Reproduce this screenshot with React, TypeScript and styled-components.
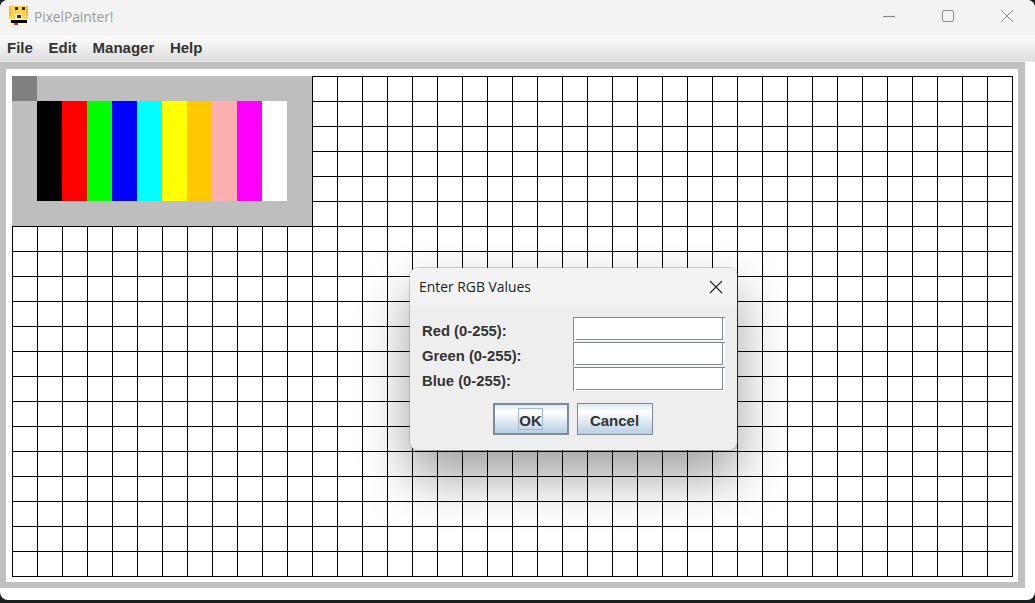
import React from 'react';
import styled, { createGlobalStyle } from 'styled-components';

const GlobalStyle = createGlobalStyle`
  html, body {
    margin: 0;
    padding: 0;
    background: #1c2023;
    overflow: hidden;
  }
  * {
    box-sizing: border-box;
  }
`;

const COLORS = ['#000000', '#ff0000', '#00ff00', '#0000ff', '#00ffff', '#ffff00', '#ffc800', '#ffafaf', '#ff00ff', '#ffffff'];
const MENUS = ['File', 'Edit', 'Manager', 'Help'];
const CHANNELS = ['Red', 'Green', 'Blue'];

const AppIcon: React.FC = () => (
  <svg width="20" height="20" viewBox="0 0 20 20" shapeRendering="crispEdges">
    <rect x="0" y="0" width="19" height="13" fill="#fdd44c" />
    <rect x="0" y="13" width="19" height="7" fill="#fff3d0" />
    <rect x="0" y="0" width="2" height="10" fill="#f7b93a" />
    <rect x="17" y="0" width="2" height="10" fill="#f7b93a" />
    <rect x="6" y="1" width="3" height="3" fill="#2a2a2a" />
    <rect x="13" y="1" width="3" height="3" fill="#2a2a2a" />
    <rect x="6" y="8" width="7" height="5" fill="#fff3d0" />
    <rect x="8" y="9" width="4" height="3" fill="#3a2c20" />
    <rect x="2" y="14" width="16" height="3" fill="#000000" />
    <rect x="5" y="17" width="4" height="2" fill="#e0202a" />
  </svg>
);

const App: React.FC = () => {
  return (
    <>
      <GlobalStyle />
      <Window>
        <TitleBar>
          <TitleIcon>
            <AppIcon />
          </TitleIcon>
          <TitleText>PixelPainter!</TitleText>
          <WindowControls>
            <ControlButton>
              <svg width="12" height="12" viewBox="0 0 12 12">
                <path d="M0 6.5h12" stroke="#8c8c8c" strokeWidth="1.2" fill="none" />
              </svg>
            </ControlButton>
            <ControlButton>
              <svg width="14" height="14" viewBox="0 0 14 14">
                <rect x="1.5" y="1.5" width="11" height="11" rx="1.5" stroke="#8c8c8c" strokeWidth="1" fill="none" />
              </svg>
            </ControlButton>
            <ControlButton>
              <svg width="14" height="14" viewBox="0 0 14 14">
                <path d="M1 1l12 12M13 1L1 13" stroke="#8c8c8c" strokeWidth="1" fill="none" />
              </svg>
            </ControlButton>
          </WindowControls>
        </TitleBar>
        <MenuBar>
          {MENUS.map((menu) => (
            <MenuItem key={menu}>{menu}</MenuItem>
          ))}
        </MenuBar>
        <Frame>
          <Canvas>
            <Grid />
            <Palette>
              <SelectedColor />
              <Swatches>
                {COLORS.map((color) => (
                  <Swatch key={color} $color={color} />
                ))}
              </Swatches>
            </Palette>
          </Canvas>
        </Frame>
        <Dialog>
          <DialogHeader>
            <DialogTitle>Enter RGB Values</DialogTitle>
            <svg width="14" height="14" viewBox="0 0 14 14">
              <path d="M1 1l12 12M13 1L1 13" stroke="#222" strokeWidth="1.1" fill="none" />
            </svg>
          </DialogHeader>
          <DialogBody>
            <Fields>
              {CHANNELS.map((channel) => (
                <React.Fragment key={channel}>
                  <FieldLabel>{`${channel} (0-255):`}</FieldLabel>
                  <FieldInput />
                </React.Fragment>
              ))}
            </Fields>
            <Buttons>
              <DialogButton $primary>
                <FocusRing>OK</FocusRing>
              </DialogButton>
              <DialogButton>Cancel</DialogButton>
            </Buttons>
          </DialogBody>
        </Dialog>
      </Window>
    </>
  );
};

export default App;

const Window = styled.div`
  position: relative;
  width: 1035px;
  height: 600px;
  display: flex;
  flex-direction: column;
  background: #ffffff;
  border-radius: 8px;
  overflow: hidden;
  font-family: 'Liberation Sans', Arial, sans-serif;
`;

const TitleBar = styled.div`
  height: 35px;
  flex: none;
  display: flex;
  align-items: center;
  background: #f3f3f3;
`;

const TitleIcon = styled.div`
  display: flex;
  margin: 0 5px 3px 9px;
`;

const TitleText = styled.span`
  font-family: 'Open Sans', 'Noto Sans', sans-serif;
  font-size: 13.7px;
  color: #9a9a9a;
  margin-bottom: 3px;
`;

const WindowControls = styled.div`
  margin-left: auto;
  display: flex;
  align-items: center;
  gap: 3px;
  margin-bottom: 3px;
`;

const ControlButton = styled.div`
  width: 56px;
  display: flex;
  justify-content: center;
  align-items: center;
`;

const MenuBar = styled.div`
  height: 27px;
  flex: none;
  display: flex;
  align-items: center;
  gap: 15.7px;
  padding: 0 0 2px 7px;
  background: linear-gradient(#fbfbfb, #f4f4f4 30%, #dedede 96%, #e9e9e9 96%);
`;

const MenuItem = styled.span`
  font-size: 15px;
  font-weight: 700;
  color: #333333;
`;

const Frame = styled.div`
  width: 1025px;
  height: 526px;
  flex: none;
  padding: 7px 7px 6px 6px;
  background: #c0c0c0;
`;

const Canvas = styled.div`
  position: relative;
  height: 100%;
  padding: 7px 6px;
  background: #ffffff;
`;

const Grid = styled.div`
  width: 1001px;
  height: 501px;
  background-image: linear-gradient(#000 1px, transparent 1px), linear-gradient(90deg, #000 1px, transparent 1px);
  background-size: 25px 25px;
`;

const Palette = styled.div`
  position: absolute;
  left: 6px;
  top: 7px;
  width: 300px;
  height: 150px;
  background: #bebebe;
`;

const SelectedColor = styled.div`
  width: 25px;
  height: 25px;
  background: #808080;
`;

const Swatches = styled.div`
  display: flex;
  padding-left: 25px;
`;

const Swatch = styled.div<{ $color: string }>`
  width: 25px;
  height: 100px;
  background: ${(p) => p.$color};
`;

const Dialog = styled.div`
  position: absolute;
  left: 410px;
  top: 268px;
  width: 327px;
  height: 182px;
  border-radius: 8px;
  overflow: hidden;
  background: #eeeeee;
  box-shadow: 0 0 0 1px rgba(120, 120, 120, 0.35), 0 26px 50px 2px rgba(0, 0, 0, 0.36);
`;

const DialogHeader = styled.div`
  height: 37px;
  display: flex;
  align-items: center;
  justify-content: space-between;
  padding: 0 14px 0 9px;
  background: #f3f3f3;
`;

const DialogTitle = styled.span`
  font-family: 'Open Sans', 'Noto Sans', sans-serif;
  font-size: 13.9px;
  color: #222222;
`;

const DialogBody = styled.div`
  padding: 12px 0 0 12px;
`;

const Fields = styled.div`
  display: grid;
  grid-template-columns: 151px 152px;
  grid-auto-rows: 24px;
  row-gap: 1px;
  align-items: center;
`;

const FieldLabel = styled.label`
  padding-top: 3px;
  font-size: 14.8px;
  font-weight: 700;
  color: #333333;
`;

const FieldInput = styled.div`
  position: relative;
  height: 24px;
  background: #ffffff;
  border-top: 1px solid #7a8a99;
  border-left: 1px solid #7a8a99;
  box-shadow: inset -2px -1px 0 #ffffff, inset -3px -2px 0 #7a8a99;

  &::after {
    content: '';
    position: absolute;
    left: 0;
    bottom: 1px;
    width: 2px;
    height: 1px;
    background: #ffffff;
  }
`;

const Buttons = styled.div`
  display: flex;
  justify-content: center;
  gap: 8px;
  margin-top: 12px;
  padding-right: 14px;
`;

const DialogButton = styled.div<{ $primary?: boolean }>`
  width: 76px;
  height: 32px;
  display: flex;
  align-items: center;
  justify-content: center;
  padding-top: ${(p) => (p.$primary ? '0' : '2px')};
  font-size: 15px;
  font-weight: 700;
  color: #333333;
  border: 1px solid #7a8a99;
  border-width: ${(p) => (p.$primary ? '2px' : '1px')};
  background: linear-gradient(#dde8f3, #ffffff 25%, #b8cfe5);
`;

const FocusRing = styled.span`
  display: flex;
  align-items: center;
  justify-content: center;
  width: 25px;
  height: 22px;
  padding-top: 2px;
  border: 1px solid #a3b8cc;
`;
